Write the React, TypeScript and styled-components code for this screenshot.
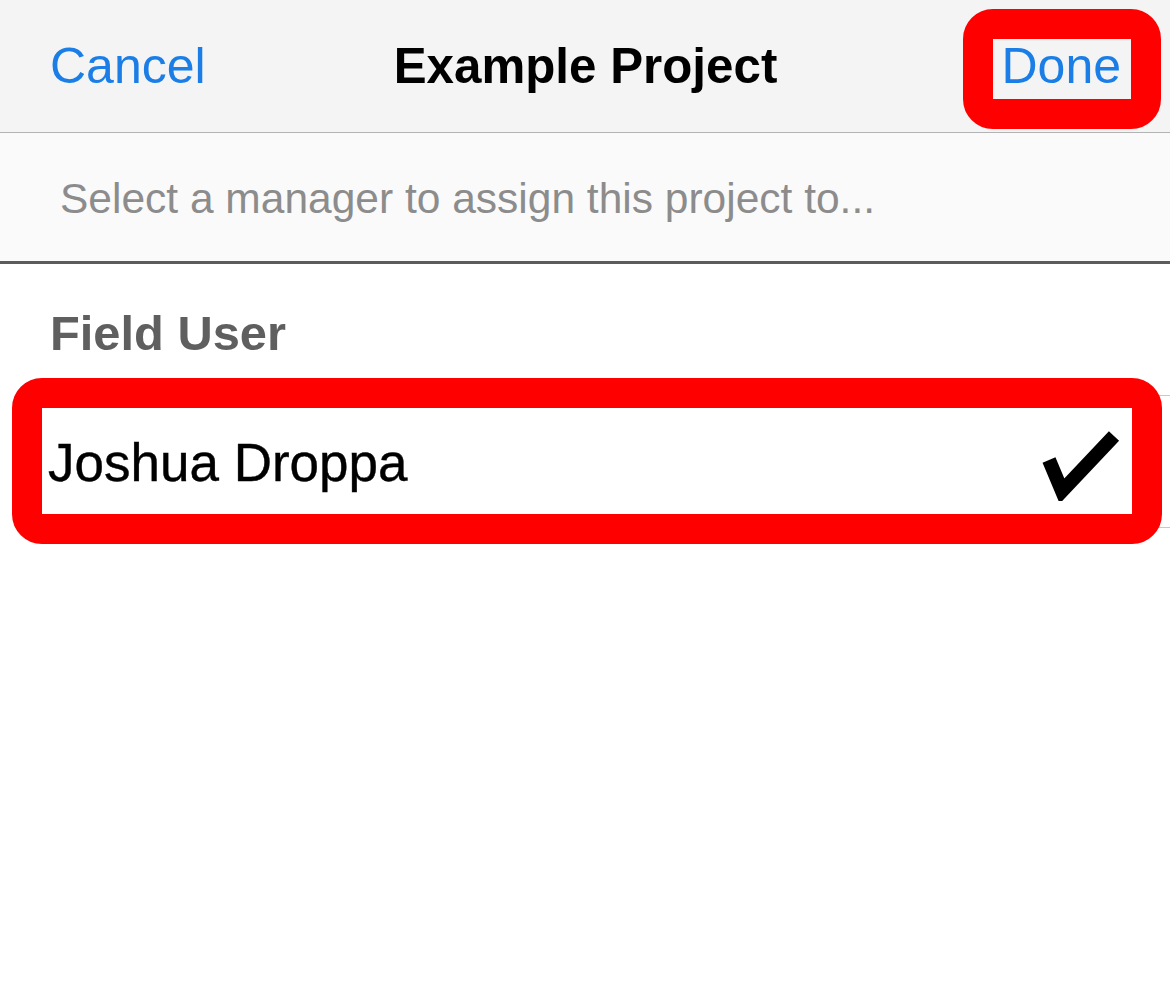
import React from 'react';
import styled, { createGlobalStyle } from 'styled-components';

const GlobalStyle = createGlobalStyle`
  html, body {
    margin: 0;
    padding: 0;
    background: #ffffff;
  }
  body {
    font-family: "Liberation Sans", Arial, sans-serif;
    -webkit-font-smoothing: antialiased;
  }
`;

const Screen = styled.div`
  position: relative;
  width: 1170px;
  height: 996px;
  background: #ffffff;
  overflow: hidden;
`;

const NavBar = styled.header`
  display: grid;
  grid-template-columns: 1fr auto 1fr;
  align-items: center;
  height: 133px;
  padding: 0 49px 0 50px;
  box-sizing: border-box;
  background: #f4f4f4;
  border-bottom: 1px solid #b3b3b3;
`;

const NavButton = styled.button<{ $align: 'left' | 'right' }>`
  justify-self: ${({ $align }) => ($align === 'left' ? 'start' : 'end')};
  border: none;
  background: none;
  padding: 0;
  font-family: inherit;
  font-size: 50px;
  color: #1a7ee6;
  line-height: 1;
  cursor: pointer;
`;

const Title = styled.h1`
  margin: 0;
  font-size: 49.3px;
  font-weight: 700;
  color: #000000;
  line-height: 1;
`;

const Prompt = styled.div`
  display: flex;
  align-items: center;
  height: 131px;
  padding: 4px 0 0 60px;
  box-sizing: border-box;
  background: #fafafa;
  border-bottom: 3px solid #5c5c5c;
  font-size: 42.5px;
  color: #8c8c8c;
`;

const SectionHeader = styled.h2`
  display: flex;
  align-items: center;
  height: 131px;
  margin: 0;
  padding: 6px 0 0 50px;
  box-sizing: border-box;
  font-size: 48.8px;
  font-weight: 700;
  color: #5f5f5f;
`;

const List = styled.ul`
  list-style: none;
  margin: 0;
  padding: 0;
`;

const Row = styled.li`
  display: flex;
  align-items: center;
  justify-content: space-between;
  height: 133px;
  margin-left: 48px;
  padding: 2px 50px 0 0;
  box-sizing: border-box;
  border-top: 1px solid #c8c8cc;
  border-bottom: 1px solid #c8c8cc;
`;

const RowLabel = styled.span`
  font-size: 53px;
  color: #000000;
  -webkit-text-stroke: 0.4px #000000;
`;

const Check = styled.svg`
  width: 82px;
  height: 74px;
  margin-top: 2px;
  flex: none;
`;

const Highlight = styled.div<{ $top: number; $left: number; $w: number; $h: number }>`
  position: absolute;
  top: ${({ $top }) => $top}px;
  left: ${({ $left }) => $left}px;
  width: ${({ $w }) => $w}px;
  height: ${({ $h }) => $h}px;
  box-sizing: border-box;
  border: 30px solid #ff0000;
  border-radius: 30px;
  pointer-events: none;
`;

export default function App() {
  return (
    <Screen>
      <GlobalStyle />
      <NavBar>
        <NavButton $align="left">Cancel</NavButton>
        <Title>Example Project</Title>
        <NavButton $align="right">Done</NavButton>
      </NavBar>
      <Prompt>Select a manager to assign this project to...</Prompt>
      <SectionHeader>Field User</SectionHeader>
      <List>
        <Row>
          <RowLabel>Joshua Droppa</RowLabel>
          <Check viewBox="0 0 82 74">
            <polyline
              points="11,33 24,64 76,9"
              fill="none"
              stroke="#000"
              strokeWidth="14"
              strokeLinejoin="miter"
              strokeMiterlimit="3"
            />
          </Check>
        </Row>
      </List>
      <Highlight $top={9} $left={963} $w={198} $h={120} />
      <Highlight $top={378} $left={12} $w={1150} $h={166} />
    </Screen>
  );
}
